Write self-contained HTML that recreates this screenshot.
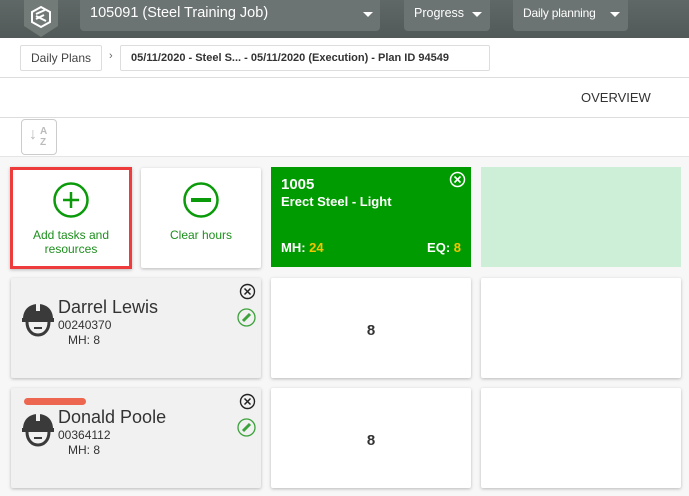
<!DOCTYPE html><html><head><style>
*{box-sizing:border-box;margin:0;padding:0}
body{width:689px;height:496px;overflow:hidden;font-family:"Liberation Sans",sans-serif;background:#fff;position:relative}
.abs{position:absolute;white-space:nowrap}
.top{left:0;top:0;width:689px;height:38px;background:linear-gradient(#5f6866,#515a58)}
.dd{background:#6b7472;border-radius:0 0 4px 4px;color:#fff;font-size:14px;height:31px;top:0;line-height:27px;padding-left:10px}
.tri{position:absolute;width:0;height:0;border-left:5px solid transparent;border-right:5px solid transparent;border-top:5px solid #fff;top:12px}
.bc{border:1px solid #ddd;border-radius:2px;height:26px;top:45px;font-size:12px;line-height:24px;padding:0 10px;color:#444}
.card{position:absolute;background:#fff;box-shadow:0 1px 3px rgba(0,0,0,.25);border-radius:2px}
.pc{background:#f1f1f1}
.n{font-size:18px;color:#333}
</style></head><body>
<div class="abs top"></div>
<svg class="abs" style="left:21px;top:0" width="40" height="38" viewBox="0 0 40 38"><path d="M3 0H37V26L20 37L3 26Z" fill="#737b79"/><path d="M20 7L29 12V22L20 27L11 22V12Z" fill="none" stroke="#fff" stroke-width="2"/><path d="M15 14L24 10M15 16L25 21M15 19L23 15" stroke="#fff" stroke-width="2"/></svg>
<div class="abs dd" style="left:80px;width:300px;font-size:14.5px;padding-left:10px">105091 (Steel Training Job)<div class="tri" style="left:283px"></div></div>
<div class="abs dd" style="left:404px;width:86px;font-size:12.5px;padding-left:10px">Progress<div class="tri" style="left:68px"></div></div>
<div class="abs dd" style="left:513px;width:115px;font-size:12px;padding-left:10px;letter-spacing:-0.2px">Daily planning<div class="tri" style="left:97px"></div></div>
<div class="abs bc" style="left:20px;width:82px;padding:0 0 0 10px;font-size:12px">Daily Plans</div>
<div class="abs" style="left:109px;top:50px;font-size:11px;color:#666">›</div>
<div class="abs bc" style="left:120px;width:370px;font-weight:bold;color:#333;font-size:11px">05/11/2020 - Steel S... - 05/11/2020 (Execution) - Plan ID 94549</div>
<div class="abs" style="left:0;top:77px;width:689px;height:1px;background:#ddd"></div>
<div class="abs" style="left:581px;top:90px;font-size:13px;color:#333">OVERVIEW</div>
<div class="abs" style="left:0;top:117px;width:689px;height:1px;background:#ddd"></div>
<div class="abs" style="left:21px;top:119px;width:36px;height:36px;border:1px solid #ccc;border-radius:4px;color:#bbb;font-size:10px;font-weight:bold"><span style="position:absolute;left:7px;top:6px;font-size:16px;font-weight:normal">↓</span><span style="position:absolute;left:18px;top:6px">A</span><span style="position:absolute;left:18px;top:17px">Z</span></div>
<div class="abs" style="left:0;top:156px;width:689px;height:340px;background:#f7f7f7;border-top:1px solid #e5e5e5"></div>
<div class="card" style="left:10px;top:167px;width:122px;height:102px;border:3px solid #ee3b3b;border-radius:0;text-align:center;color:#1d8f1d;font-size:12px">
<svg style="margin-top:11px" width="38" height="38" viewBox="0 0 38 38"><circle cx="19" cy="19" r="16.5" fill="none" stroke="#0a9a0a" stroke-width="2.5"/><path d="M19 11V27M11 19H27" stroke="#0a9a0a" stroke-width="2.5"/></svg><div style="margin-top:6px;line-height:14px">Add tasks and<br>resources</div></div>
<div class="card" style="left:141px;top:168px;width:120px;height:100px;text-align:center;color:#1d8f1d;font-size:12px">
<svg style="margin-top:13px" width="38" height="38" viewBox="0 0 38 38"><circle cx="19" cy="19" r="16.5" fill="none" stroke="#0a9a0a" stroke-width="2.5"/><path d="M9 19H29" stroke="#0a9a0a" stroke-width="4"/></svg><div style="margin-top:6px">Clear hours</div></div>
<div class="abs" style="left:271px;top:167px;width:200px;height:100px;background:#009b00;color:#fff;font-weight:bold">
<div class="abs" style="left:10px;top:9px;font-size:15px">1005</div>
<div class="abs" style="left:10px;top:27px;font-size:13px">Erect Steel - Light</div>
<div class="abs" style="left:10px;top:73px;font-size:13px">MH: <span style="color:#f5c400">24</span></div>
<div class="abs" style="right:10px;top:73px;font-size:13px">EQ: <span style="color:#f5c400">8</span></div>
<svg class="abs" style="left:178px;top:4px" width="17" height="17" viewBox="0 0 17 17"><circle cx="8.5" cy="8.5" r="7" fill="none" stroke="#fff" stroke-width="1.5"/><path d="M5.5 5.5L11.5 11.5M11.5 5.5L5.5 11.5" stroke="#fff" stroke-width="1.6"/></svg></div>
<div class="abs" style="left:481px;top:167px;width:200px;height:100px;background:#cdeed7"></div>

<div class="card pc" style="left:11px;top:278px;width:250px;height:100px"></div>
<div class="card" style="left:271px;top:278px;width:200px;height:100px;text-align:center;line-height:106px;font-weight:bold;font-size:15px;color:#333">8</div>
<div class="card" style="left:481px;top:278px;width:200px;height:100px"></div>
<div class="card pc" style="left:11px;top:388px;width:250px;height:100px"></div>
<div class="abs" style="left:24px;top:398px;width:62px;height:7px;border-radius:4px;background:#ec6650"></div>
<div class="card" style="left:271px;top:388px;width:200px;height:100px;text-align:center;line-height:106px;font-weight:bold;font-size:15px;color:#333">8</div>
<div class="card" style="left:481px;top:388px;width:200px;height:100px"></div>

<div class="abs n" style="left:58px;top:297px">Darrel Lewis</div>
<div class="abs" style="left:58px;top:318px;font-size:12px;color:#333">00240370</div>
<div class="abs" style="left:68px;top:333px;font-size:12px;color:#333">MH: 8</div>
<div class="abs n" style="left:58px;top:407px">Donald Poole</div>
<div class="abs" style="left:58px;top:428px;font-size:12px;color:#333">00364112</div>
<div class="abs" style="left:68px;top:443px;font-size:12px;color:#333">MH: 8</div>

<svg class="abs" style="left:22px;top:302px" width="32" height="36" viewBox="0 0 32 36"><path d="M1 17C1 7 8 2 16 2S31 7 31 17Z" fill="#3a3a3a"/><rect x="14" y="1" width="4" height="8" fill="#f1f1f1"/><rect x="0" y="16" width="32" height="4" fill="#3a3a3a"/><path d="M5 20C5 28 10 33 16 33S27 28 27 20" fill="none" stroke="#3a3a3a" stroke-width="3"/><path d="M12 26H20" stroke="#3a3a3a" stroke-width="2"/></svg>
<svg class="abs" style="left:22px;top:412px" width="32" height="36" viewBox="0 0 32 36"><path d="M1 17C1 7 8 2 16 2S31 7 31 17Z" fill="#3a3a3a"/><rect x="14" y="1" width="4" height="8" fill="#f1f1f1"/><rect x="0" y="16" width="32" height="4" fill="#3a3a3a"/><path d="M5 20C5 28 10 33 16 33S27 28 27 20" fill="none" stroke="#3a3a3a" stroke-width="3"/><path d="M12 26H20" stroke="#3a3a3a" stroke-width="2"/></svg>

<svg class="abs" style="left:239px;top:283px" width="17" height="17" viewBox="0 0 17 17"><circle cx="8.5" cy="8.5" r="7" fill="none" stroke="#222" stroke-width="1.4"/><path d="M5.5 5.5L11.5 11.5M11.5 5.5L5.5 11.5" stroke="#222" stroke-width="1.5"/></svg>
<svg class="abs" style="left:237px;top:308px" width="19" height="19" viewBox="0 0 19 19"><circle cx="9.5" cy="9.5" r="8.5" fill="none" stroke="#3ca23c" stroke-width="1.3"/><path d="M6 13L13 6" stroke="#3ca23c" stroke-width="3"/></svg>
<svg class="abs" style="left:239px;top:393px" width="17" height="17" viewBox="0 0 17 17"><circle cx="8.5" cy="8.5" r="7" fill="none" stroke="#222" stroke-width="1.4"/><path d="M5.5 5.5L11.5 11.5M11.5 5.5L5.5 11.5" stroke="#222" stroke-width="1.5"/></svg>
<svg class="abs" style="left:237px;top:418px" width="19" height="19" viewBox="0 0 19 19"><circle cx="9.5" cy="9.5" r="8.5" fill="none" stroke="#3ca23c" stroke-width="1.3"/><path d="M6 13L13 6" stroke="#3ca23c" stroke-width="3"/></svg>
</body></html>
